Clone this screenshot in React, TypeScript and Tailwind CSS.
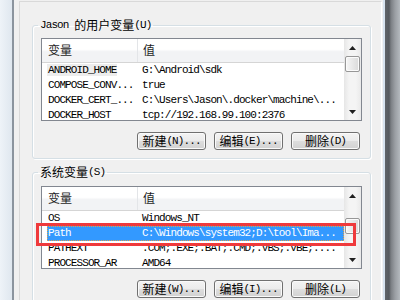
import React from 'react';

const mono = "font-['Liberation_Mono',monospace] text-[11px] tracking-[-0.9px]";
const cjk = "font-['Noto_Sans_CJK_SC',sans-serif] text-[12px]";

type Row = { name: string; value: string; state?: 'gray' | 'blue' };

const userRows: Row[] = [
  { name: 'ANDROID_HOME', value: 'G:\\Android\\sdk', state: 'gray' },
  { name: 'COMPOSE_CONV...', value: 'true' },
  { name: 'DOCKER_CERT_...', value: 'C:\\Users\\Jason\\.docker\\machine\\...' },
  { name: 'DOCKER_HOST', value: 'tcp://192.168.99.100:2376' },
];

const systemRows: Row[] = [
  { name: 'OS', value: 'Windows_NT' },
  { name: 'Path', value: 'C:\\Windows\\system32;D:\\tool\\Ima...', state: 'blue' },
  { name: 'PATHEXT', value: '.COM;.EXE;.BAT;.CMD;.VBS;.VBE;....' },
  { name: 'PROCESSOR_AR', value: 'AMD64' },
];

const Arrow = ({ down }: { down?: boolean }) => (
  <svg width="7" height="4" viewBox="0 0 7 4">
    {down ? <path d="M0 0h7L3.5 4z" fill="#1f1f1f" /> : <path d="M0 4h7L3.5 0z" fill="#1f1f1f" />}
  </svg>
);

const Scrollbar = ({ thumbClass }: { thumbClass: string }) => (
  <div className="w-[17px] shrink-0 flex flex-col bg-[linear-gradient(to_right,#e6e6e6,#f4f4f4_30%,#f4f4f4_70%,#e9e9e9)]">
    <div className="h-[17px] flex items-center justify-center">
      <Arrow />
    </div>
    <div
      className={`mx-[1px] h-[16px] rounded-[2px] border border-[#979797] bg-[linear-gradient(to_right,#f6f6f6,#e8e8e8_50%,#dadada)] shadow-[inset_0_0_0_1px_#fbfbfb] ${thumbClass}`}
    />
    <div className="mt-auto h-[17px] flex items-center justify-center">
      <Arrow down />
    </div>
  </div>
);

const ListView = ({ rows, thumbClass }: { rows: Row[]; thumbClass: string }) => (
  <div className="h-[83px] border border-[#828790] bg-white flex">
    <div className="flex-1 min-w-0 flex flex-col">
      <div className="h-[24px] shrink-0 flex border-b border-[#d5d5d5] bg-[linear-gradient(to_bottom,#ffffff_0%,#ffffff_45%,#f2f3f5_55%,#f2f3f5_100%)] text-[#1e1e1e]">
        <div className={`w-[96px] border-r border-[#e3e5e8] pl-[6px] pb-[2px] flex items-center ${cjk}`}>变量</div>
        <div className={`flex-1 pl-[5px] pb-[2px] flex items-center ${cjk}`}>值</div>
      </div>
      <div className="flex-1 overflow-hidden">
        {rows.map(r => (
          <div
            key={r.name}
            className={`ml-[5px] h-[15px] flex items-center leading-[15px] whitespace-nowrap ${mono} ${
              r.state === 'blue'
                ? 'bg-[#3399ff] text-white outline-1 outline-dotted -outline-offset-1 outline-[#e3a04a]'
                : 'text-black'
            }`}
          >
            <div className="w-[90px] shrink-0">
              <span className={`px-[1px] ${r.state === 'gray' ? 'bg-[#ededed]' : ''}`}>{r.name}</span>
            </div>
            <div className="pl-[5px]">{r.value}</div>
          </div>
        ))}
      </div>
    </div>
    <Scrollbar thumbClass={thumbClass} />
  </div>
);

const Btn = ({ zh, rest }: { zh: string; rest: string }) => (
  <button
    type="button"
    className="w-[69px] h-[18px] rounded-[3px] border border-[#707070] bg-[linear-gradient(to_bottom,#f3f3f3_0%,#ebebeb_50%,#dedede_50%,#d2d2d2_100%)] shadow-[inset_0_0_0_1px_#fafafa] flex items-center justify-center leading-[16px] text-black"
  >
    <span className={cjk}>{zh}</span>
    <span className={mono}>{rest}</span>
  </button>
);

const GroupBox = ({
  title,
  className,
  listClass,
  children,
}: {
  title: React.ReactNode;
  className: string;
  listClass: string;
  children: React.ReactNode;
}) => (
  <fieldset
    className={`ml-[12px] mr-[10px] border border-[#d5dfe5] rounded-[3px] px-[8px] pb-[8px] shadow-[inset_1px_1px_0_#ffffff,1px_1px_0_#ffffff] ${className}`}
  >
    <legend className="-ml-[3px] px-[2px] h-[16px] flex items-center whitespace-pre text-black">{title}</legend>
    <div className={listClass}>{children}</div>
  </fieldset>
);

export default function App() {
  return (
    <div className="relative w-[400px] h-[300px] overflow-hidden flex bg-[#f0f0f0]">
      {/* left window frame */}
      <div className="w-[12px] shrink-0 bg-[linear-gradient(to_right,#eef3f8,#dfe7ef)]" />
      <div className="w-[2px] shrink-0 bg-[#8b949e]" />

      {/* dialog body */}
      <div className="flex-1 pl-[5px] pt-[1px] pr-[1px]">
        <div className="h-full border-l border-t border-[#d9d9d9] border-r border-r-white">
          <GroupBox
            className="mt-[15px]"
            listClass="mt-[5px]"
            title={
              <>
                <span className={mono}>{'Jason\u00a0'}</span>
                <span className={cjk}>的用户变量</span>
                <span className={mono}>(U)</span>
              </>
            }
          >
            <ListView rows={userRows} thumbClass="mt-0" />
            <div className="mt-[11px] flex justify-end gap-2 pr-[2px]">
              <Btn zh="新建" rest="(N)..." />
              <Btn zh="编辑" rest="(E)..." />
              <Btn zh="删除" rest="(D)" />
            </div>
          </GroupBox>

          <GroupBox
            className="mt-[5px]"
            listClass="mt-[6px]"
            title={
              <>
                <span className={cjk}>系统变量</span>
                <span className={mono}>(S)</span>
              </>
            }
          >
            <ListView rows={systemRows} thumbClass="mt-[14px]" />
            <div className="mt-[11px] flex justify-end gap-2 pr-[2px]">
              <Btn zh="新建" rest="(W)..." />
              <Btn zh="编辑" rest="(I)..." />
              <Btn zh="删除" rest="(L)" />
            </div>
          </GroupBox>
        </div>
      </div>

      {/* right window frame */}
      <div className="w-[17px] shrink-0 bg-[linear-gradient(to_right,#d6e2ee_0px,#d6e2ee_2px,#5f6368_2px,#55595e_6px,#7b7f84_8px,#9a9ea3_12px,#b4b9be_17px)]" />

      {/* red highlight marking the Path row */}
      <div className="absolute left-[36px] top-[223px] w-[320px] h-[23px] border-[3px] border-[#ef3a3c] pointer-events-none" />
    </div>
  );
}
